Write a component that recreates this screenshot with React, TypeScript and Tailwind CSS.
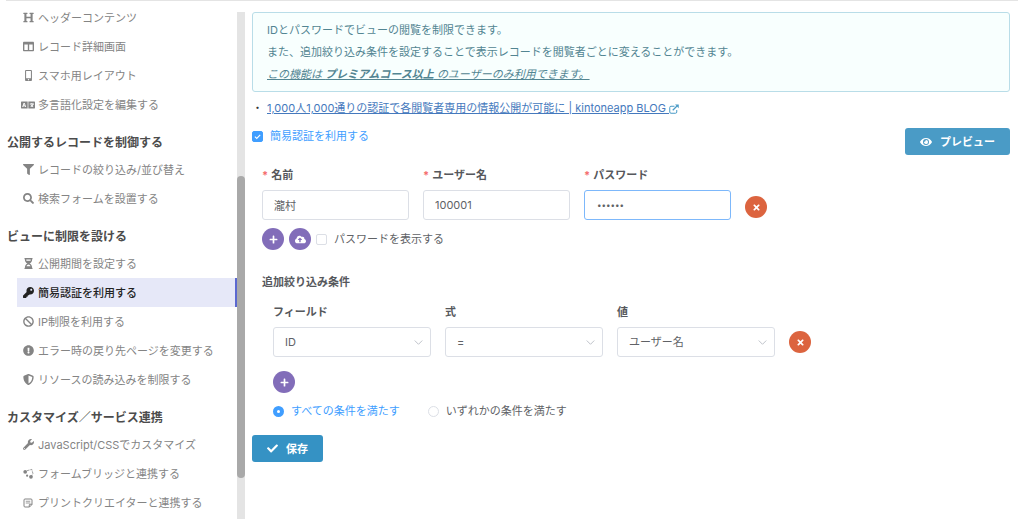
import React, { useState } from 'react';
import {
  FaBan,
  FaCheck,
  FaCloudUploadAlt,
  FaColumns,
  FaExclamationCircle,
  FaEye,
  FaFilter,
  FaHeading,
  FaHourglassHalf,
  FaKey,
  FaLanguage,
  FaMobileAlt,
  FaPlus,
  FaSearch,
  FaShieldAlt,
  FaTimes,
  FaWrench,
} from 'react-icons/fa';

const BridgeIcon = () => (
  <svg viewBox="0 0 20 20" className="w-[11px] h-[11px]" fill="none" stroke="currentColor" strokeWidth="1.4">
    <path d="M7 5 L16 2.5 L18 10 L15 15" strokeDasharray="5 1.5" />
    <circle cx="4" cy="7" r="3.4" fill="currentColor" stroke="none" />
    <circle cx="14.5" cy="16" r="3.4" fill="currentColor" stroke="none" />
    <circle cx="7.5" cy="14" r="2" fill="currentColor" stroke="none" />
  </svg>
);

const NoteIcon = () => (
  <svg viewBox="0 0 20 20" className="w-[10px] h-[10px]" fill="none" stroke="currentColor" strokeWidth="2">
    <path d="M4 2 H16 Q18 2 18 4 V13 L13 18 H4 Q2 18 2 16 V4 Q2 2 4 2 Z" />
    <path d="M5.5 6.5 H14.5 M5.5 10 H14.5" strokeWidth="1.6" />
    <path d="M18 12.5 H14 Q12.5 12.5 12.5 14 V18" />
  </svg>
);

const ExternalIcon = () => (
  <svg viewBox="0 0 20 20" className="inline w-[10px] h-[10px] text-[#4a9bc6]" fill="none" stroke="currentColor" strokeWidth="2">
    <path d="M11 4.5 H4 Q1.5 4.5 1.5 7 V16 Q1.5 18.5 4 18.5 H13 Q15.5 18.5 15.5 16 V12" />
    <path d="M7.5 12.5 L16 4" strokeWidth="2.6" />
    <path d="M12 1 H19.5 V8.5 Z" fill="currentColor" stroke="none" />
  </svg>
);

const groups = [
  {
    title: '',
    items: [
      { label: 'ヘッダーコンテンツ', icon: <FaHeading /> },
      { label: 'レコード詳細画面', icon: <FaColumns /> },
      { label: 'スマホ用レイアウト', icon: <FaMobileAlt /> },
      { label: '多言語化設定を編集する', icon: <FaLanguage className="w-[14px] h-[12px] shrink-0" /> },
    ],
  },
  {
    title: '公開するレコードを制御する',
    items: [
      { label: 'レコードの絞り込み/並び替え', icon: <FaFilter /> },
      { label: '検索フォームを設置する', icon: <FaSearch /> },
    ],
  },
  {
    title: 'ビューに制限を設ける',
    items: [
      { label: '公開期間を設定する', icon: <FaHourglassHalf /> },
      { label: '簡易認証を利用する', icon: <FaKey />, active: true },
      { label: 'IP制限を利用する', icon: <FaBan /> },
      { label: 'エラー時の戻り先ページを変更する', icon: <FaExclamationCircle /> },
      { label: 'リソースの読み込みを制限する', icon: <FaShieldAlt /> },
    ],
  },
  {
    title: 'カスタマイズ／サービス連携',
    items: [
      { label: 'JavaScript/CSSでカスタマイズ', icon: <FaWrench /> },
      { label: 'フォームブリッジと連携する', icon: <BridgeIcon /> },
      { label: 'プリントクリエイターと連携する', icon: <NoteIcon /> },
    ],
  },
];

const Sidebar: React.FC = () => (
  <nav className="w-[237px] shrink-0 pt-[2px] pb-[2px]">
    {groups.map((group, i) => (
      <div key={i}>
        {group.title && (
          <h2 className="mt-3 pl-[7px] h-6 leading-6 text-xs font-bold text-[#4c4c4c]">{group.title}</h2>
        )}
        <ul className="pl-[17px]">
          {group.items.map((item) => (
            <li key={item.label}>
              <a
                href="#"
                className={
                  item.active
                    ? 'flex items-center h-[29px] pl-[5px] bg-[#e6e8f8] border-r-2 border-[#5b68d0] text-[#222] font-medium'
                    : 'flex items-center h-[29px] pl-[5px] text-[#848484]'
                }
              >
                <span className="w-3 mr-1 flex justify-center text-[11px]">{item.icon}</span>
                {item.label}
              </a>
            </li>
          ))}
        </ul>
      </div>
    ))}
  </nav>
);

const RoundButton: React.FC<{ label: string; danger?: boolean; children: React.ReactNode }> = ({
  label,
  danger,
  children,
}) => (
  <button
    type="button"
    aria-label={label}
    className={
      danger
        ? 'w-[22px] h-[22px] shrink-0 rounded-full bg-[#dc643f] text-white text-[9px] flex items-center justify-center'
        : 'w-[22px] h-[22px] shrink-0 rounded-full bg-[#826db9] text-white text-[9px] flex items-center justify-center'
    }
  >
    {children}
  </button>
);

const CheckBox: React.FC<{ label: string; checked: boolean; onChange: (v: boolean) => void }> = ({
  label,
  checked,
  onChange,
}) => (
  <label className={checked ? 'flex items-center gap-[7px] h-4 text-[#409eff]' : 'flex items-center gap-[7px] h-4 text-[#606266]'}>
    <span className="grid place-items-center">
      <input
        type="checkbox"
        checked={checked}
        onChange={(e) => onChange(e.target.checked)}
        className="appearance-none col-start-1 row-start-1 w-[11px] h-[11px] rounded-xs border border-[#dcdfe6] bg-white checked:bg-[#409eff] checked:border-[#409eff]"
      />
      {checked && (
        <svg viewBox="0 0 12 12" className="col-start-1 row-start-1 w-[9px] h-[9px] pointer-events-none" fill="none" stroke="white" strokeWidth="1.5">
          <path d="M2.5 6.2 L5 8.6 L9.6 3.8" />
        </svg>
      )}
    </span>
    {label}
  </label>
);

const TextField: React.FC<{ id: string; label: string; value: string; type?: string }> = ({ id, label, value, type }) => (
  <div className="w-[147px]">
    <label htmlFor={id} className="flex gap-[3px] h-5 leading-5 mb-[5px] font-bold text-[#56585c]">
      <span className="text-[#f56c6c]">*</span>
      {label}
    </label>
    <input
      id={id}
      type={type || 'text'}
      defaultValue={value}
      className={
        type === 'password'
          ? 'w-full h-[30px] px-3 rounded-[3px] border border-[#7db8fb] text-[8px] text-[#606266] outline-none'
          : 'w-full h-[30px] px-[11px] rounded-[3px] border border-[#dcdfe6] text-[#606266] outline-none'
      }
    />
  </div>
);

const SelectField: React.FC<{ id: string; label: string; value: string }> = ({ id, label, value }) => (
  <div className="w-[158px]">
    <label htmlFor={id} className="block h-5 leading-5 mb-[5px] font-bold text-[#56585c]">
      {label}
    </label>
    <div className="grid items-center">
      <select
        id={id}
        defaultValue={value}
        className="appearance-none col-start-1 row-start-1 w-full h-[30px] px-[11px] rounded-[3px] border border-[#dcdfe6] bg-white text-[#606266]"
      >
        <option>{value}</option>
      </select>
      <svg viewBox="0 0 10 10" className="col-start-1 row-start-1 justify-self-end mr-2 w-[9px] h-[9px] pointer-events-none" fill="none" stroke="#b8bcc4" strokeWidth="1">
        <path d="M0.8 2.8 L5 7 L9.2 2.8" />
      </svg>
    </div>
  </div>
);

const Radio: React.FC<{ label: string; checked: boolean; onChange: () => void }> = ({ label, checked, onChange }) => (
  <label className={checked ? 'flex items-center gap-[7px] text-[#409eff]' : 'flex items-center gap-[7px] text-[#606266]'}>
    <input
      type="radio"
      name="match"
      checked={checked}
      onChange={onChange}
      className="appearance-none w-[11px] h-[11px] rounded-full border border-[#dcdfe6] bg-white checked:border-4 checked:border-[#409eff]"
    />
    {label}
  </label>
);

const App: React.FC = () => {
  const [enabled, setEnabled] = useState(true);
  const [showPassword, setShowPassword] = useState(false);
  const [match, setMatch] = useState('all');

  return (
    <div className="bg-white text-[11px] leading-4 font-['Inter','Noto_Sans_CJK_JP',sans-serif]">
      <div className="h-px mx-[6px] bg-[#e4e4e4]" />
      <div className="flex">
        <Sidebar />
        {/* Scroll track */}
        <div className="w-2 shrink-0 mt-[11px] bg-[#e4e4e4] flex flex-col">
          <div className="flex-[164]" />
          <div className="flex-[302] rounded-full bg-[#a9a9a9]" />
          <div className="flex-[41]" />
        </div>

        <main className="flex-1 min-w-0 pt-[11px] pl-[7px] pr-[14px]">
          <div className="py-[6px] px-[14px] leading-[22px] rounded-[3px] border border-[#b9dde8] bg-[#f8fffe] text-[#528592]">
            <p>IDとパスワードでビューの閲覧を制限できます。</p>
            <p>また、追加絞り込み条件を設定することで表示レコードを閲覧者ごとに変えることができます。</p>
            <p className="italic underline">
              この機能は <strong>プレミアムコース以上</strong> のユーザーのみ利用できます。
            </p>
          </div>

          <p className="mt-2 flex gap-1 text-[#333]">
            ・
            <a href="#" className="text-[#4579bd] underline">
              1,000人1,000通りの認証で各閲覧者専用の情報公開が可能に | kintoneapp BLOG{' '}
              <ExternalIcon />
            </a>
          </p>

          <div className="mt-3 flex items-start justify-between">
            <CheckBox label="簡易認証を利用する" checked={enabled} onChange={setEnabled} />
            <button type="button" className="flex items-center gap-2 h-[27px] px-[15px] rounded-[3px] bg-[#4a9bc6] text-white font-bold">
              <FaEye className="w-3 h-3" />
              プレビュー
            </button>
          </div>

          <section className="mt-[10px] pl-[10px]">
            <div className="flex gap-[14px]">
              <TextField id="name" label="名前" value="瀧村" />
              <TextField id="user" label="ユーザー名" value="100001" />
              <TextField id="password" label="パスワード" value="secret" type={showPassword ? 'text' : 'password'} />
              <div className="pt-[31px]">
                <RoundButton label="削除" danger>
                  <FaTimes />
                </RoundButton>
              </div>
            </div>
            <div className="mt-2 flex items-center gap-[5px]">
              <RoundButton label="追加">
                <FaPlus />
              </RoundButton>
              <RoundButton label="アップロード">
                <FaCloudUploadAlt className="w-[11px] h-[11px]" />
              </RoundButton>
              <CheckBox label="パスワードを表示する" checked={showPassword} onChange={setShowPassword} />
            </div>
          </section>

          <section className="mt-6 pl-[10px]">
            <h3 className="font-bold text-[#56585c]">追加絞り込み条件</h3>
            <div className="mt-3 pl-[11px]">
              <div className="flex gap-[14px]">
                <SelectField id="field" label="フィールド" value="ID" />
                <SelectField id="operator" label="式" value="=" />
                <SelectField id="value" label="値" value="ユーザー名" />
                <div className="pt-[29px]">
                  <RoundButton label="条件を削除" danger>
                    <FaTimes />
                  </RoundButton>
                </div>
              </div>
              <div className="mt-[14px]">
                <RoundButton label="条件を追加">
                  <FaPlus />
                </RoundButton>
              </div>
              <div className="mt-[10px] flex gap-7">
                <Radio label="すべての条件を満たす" checked={match === 'all'} onChange={() => setMatch('all')} />
                <Radio label="いずれかの条件を満たす" checked={match === 'any'} onChange={() => setMatch('any')} />
              </div>
            </div>
          </section>

          <button type="button" className="mt-4 flex items-center gap-2 h-[27px] px-[15px] rounded-[3px] bg-[#3592c4] text-white font-bold">
            <FaCheck className="w-[11px] h-[11px]" />
            保存
          </button>
        </main>
      </div>
    </div>
  );
};

export default App;
